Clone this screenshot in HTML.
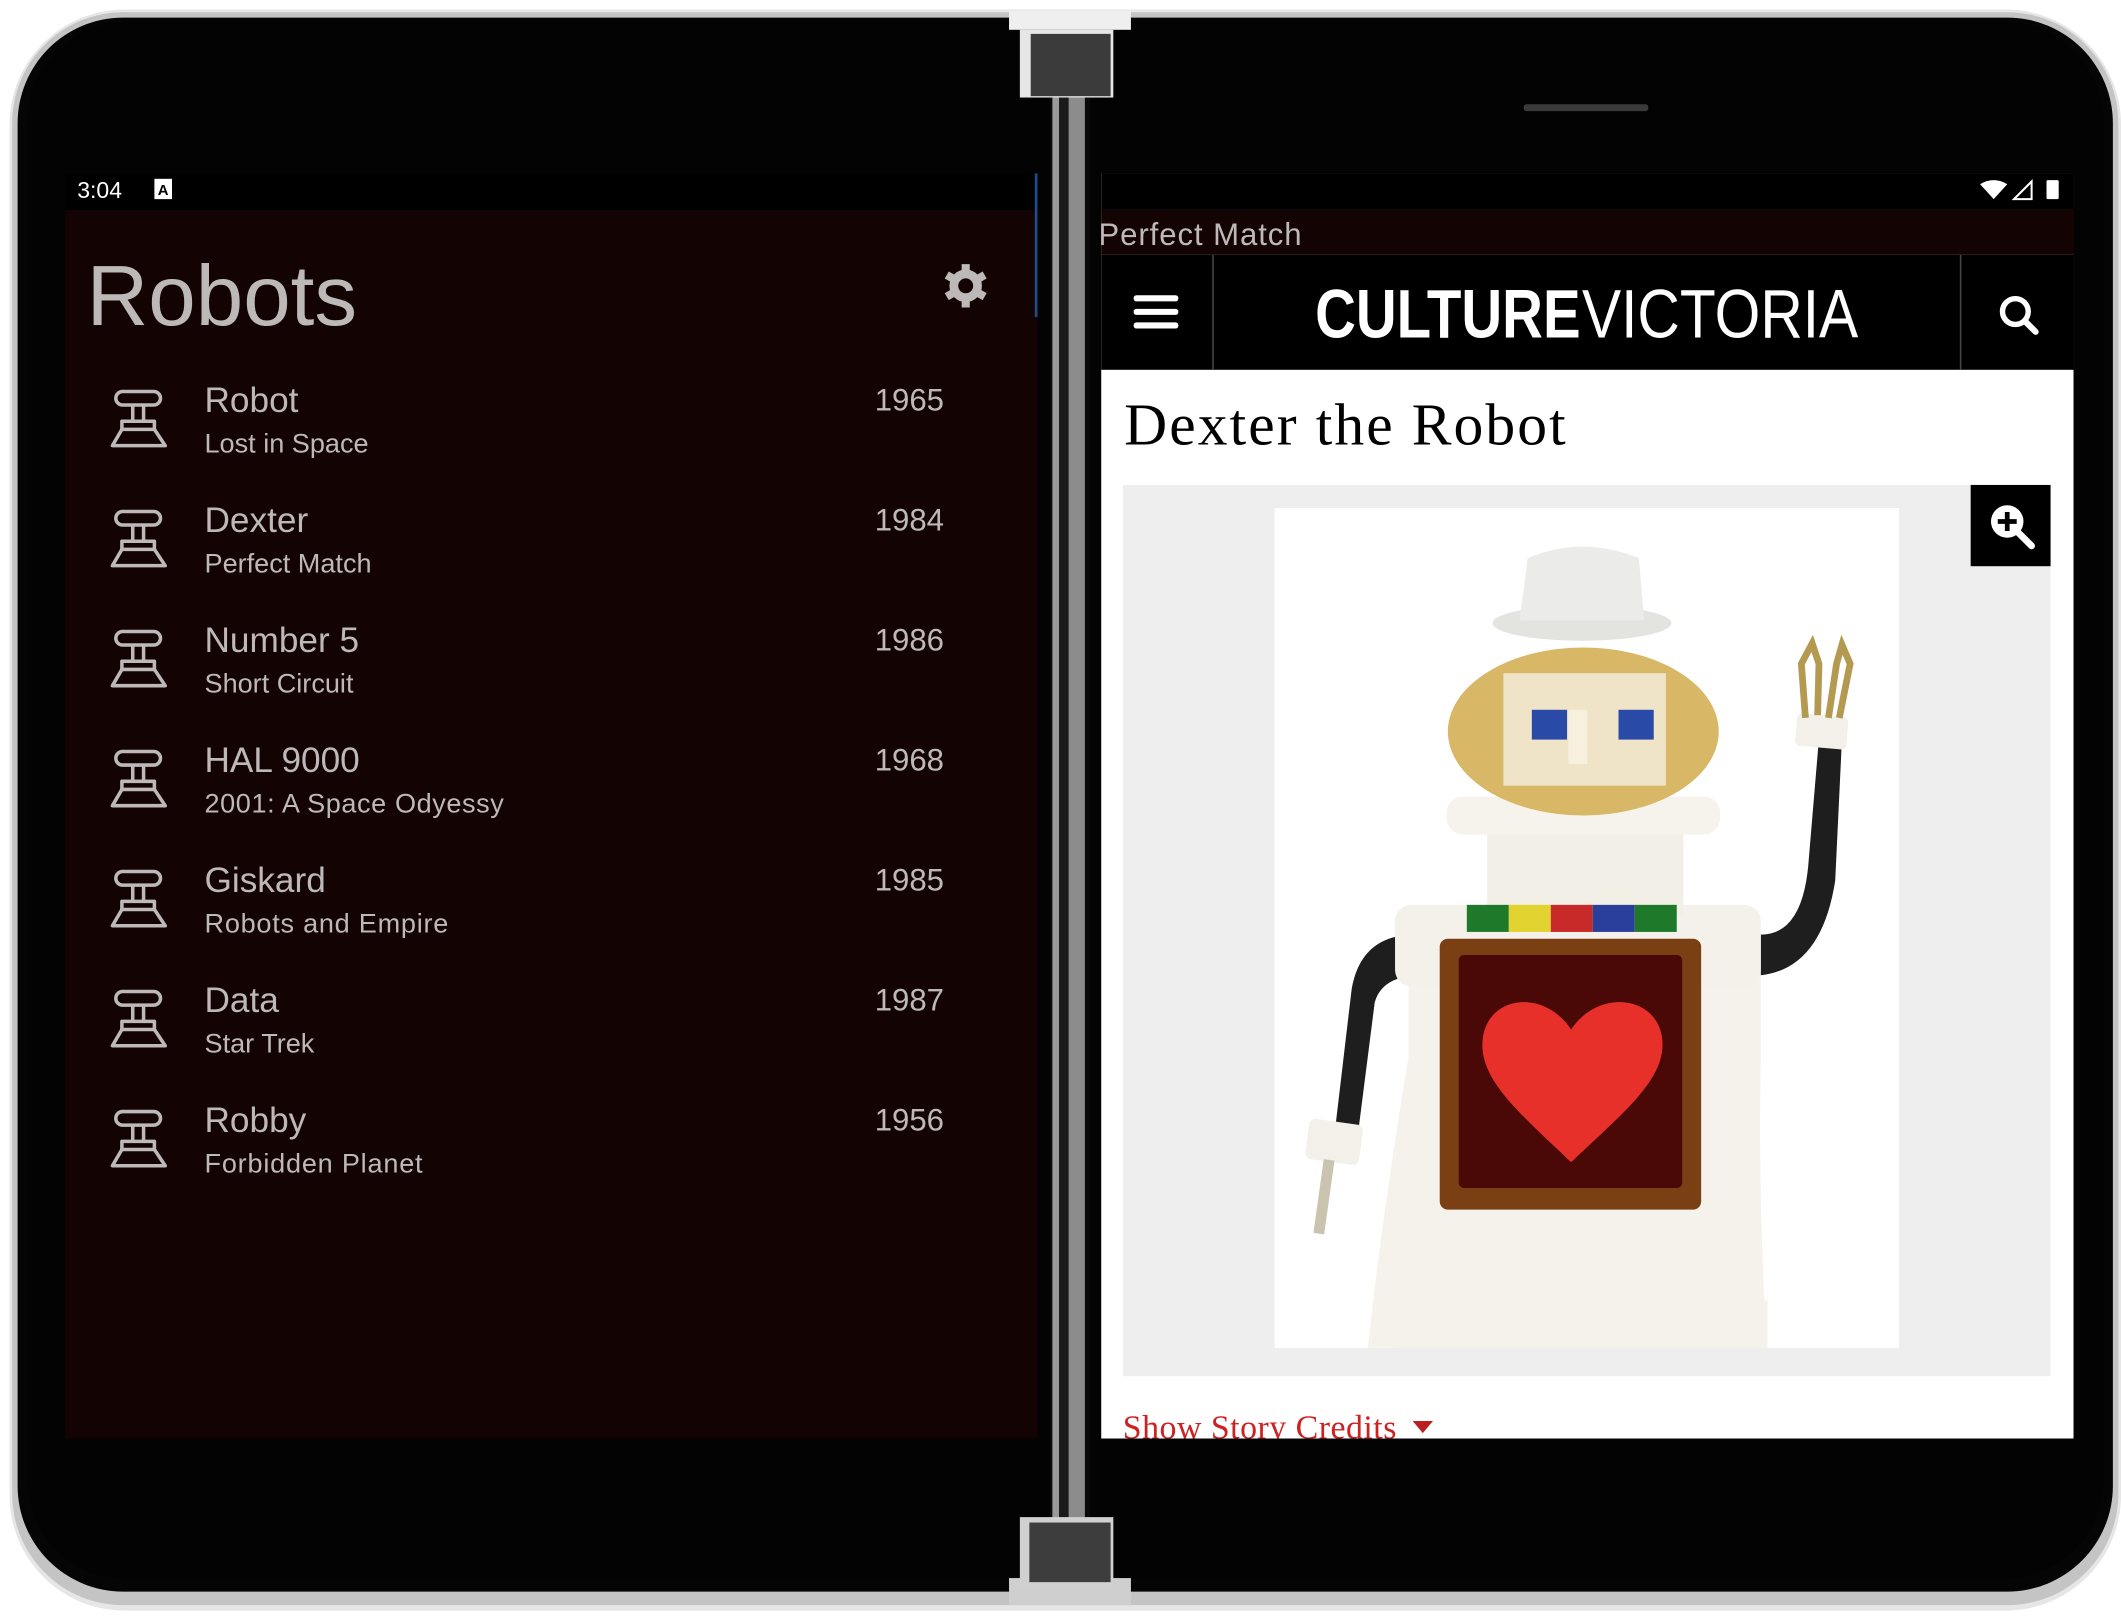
<!DOCTYPE html>
<html><head><meta charset="utf-8"><style>
html,body{margin:0;padding:0;background:#fff;width:2121px;height:1616px;overflow:hidden}
svg{display:block}
</style></head><body>
<svg width="2121" height="1616" viewBox="0 0 1566 1193" preserveAspectRatio="none" xmlns="http://www.w3.org/2000/svg">
<defs>
<g id="ico" fill="none" stroke="#bdb9b9" stroke-width="2.6" stroke-linejoin="round">
<rect x="85.5" y="289" width="33" height="10" rx="5"/>
<line x1="98" y1="299" x2="98" y2="311"/><line x1="106" y1="299" x2="106" y2="311"/>
<rect x="90" y="311" width="24" height="6"/>
<path d="M90 317 L83 329 L122 329 L114 317"/>
</g>
<clipPath id="rc"><rect x="813" y="128" width="718" height="934"/></clipPath>
</defs>
<!-- device frame -->
<rect x="7" y="7" width="1559" height="1182" rx="85" fill="#e6e6e6"/>
<rect x="9" y="9" width="1555" height="1176" rx="82" fill="#c4c4c4"/>
<rect x="13" y="13" width="1547" height="1162" rx="78" fill="#050505"/>
<rect x="20" y="16" width="1533" height="1150" rx="74" fill="#030303"/>
<!-- hinge -->
<rect x="745" y="8" width="90" height="14" fill="#efefef"/>
<rect x="775" y="60" width="30" height="1070" fill="#0a0a0a"/>
<rect x="777" y="60" width="5" height="1070" fill="#9a9a9a"/>
<rect x="782" y="60" width="7" height="1070" fill="#1a1a1a"/>
<rect x="789" y="60" width="12" height="1070" fill="#8c8c8c"/>
<rect x="753" y="22" width="69" height="50" fill="#e6e6e6"/>
<rect x="761" y="25" width="59" height="46" fill="#3b3b3b"/>
<rect x="745" y="1165" width="90" height="20" fill="#cfcfcf"/>
<rect x="753" y="1120" width="69" height="52" fill="#d0d0d0"/>
<rect x="760" y="1124" width="60" height="44" fill="#3d3d3d"/>
<rect x="1125" y="77" width="92" height="5" rx="2" fill="#3a3a3a"/>
<!-- LEFT SCREEN -->
<rect x="48" y="128" width="718" height="934" fill="#140303"/>
<rect x="48" y="128" width="718" height="27" fill="#000"/>
<rect x="764" y="128" width="2" height="106" fill="#1d4e8a"/>
<text x="57" y="146" font-family="Liberation Sans, sans-serif" font-size="17" fill="#fff">3:04</text>
<rect x="114" y="132" width="13" height="15" fill="#fff"/>
<text x="116.5" y="144" font-family="Liberation Sans, sans-serif" font-size="11" font-weight="bold" fill="#000">A</text>
<text x="64" y="240" font-family="Liberation Sans, sans-serif" font-size="63" fill="#bdb9b9">Robots</text>
<g transform="translate(713 211)" fill="#bdb9b9">
<circle r="12"/>
<g stroke="#bdb9b9" stroke-width="6"><line x1="0" y1="-16" x2="0" y2="16"/><line x1="-14" y1="-8" x2="14" y2="8"/><line x1="-14" y1="8" x2="14" y2="-8"/></g>
<circle r="5.5" fill="#140303"/>
</g>
<g font-family="Liberation Sans, sans-serif" fill="#bdb9b9">
<use href="#ico"/>
<text x="151" y="304" font-size="26">Robot</text><text x="151" y="334" font-size="20">Lost in Space</text><text x="697" y="303" font-size="23" text-anchor="end">1965</text>
<use href="#ico" y="88.6"/>
<text x="151" y="392.6" font-size="26">Dexter</text><text x="151" y="422.6" font-size="20">Perfect Match</text><text x="697" y="391.6" font-size="23" text-anchor="end">1984</text>
<use href="#ico" y="177.2"/>
<text x="151" y="481.2" font-size="26">Number 5</text><text x="151" y="511.2" font-size="20">Short Circuit</text><text x="697" y="480.2" font-size="23" text-anchor="end">1986</text>
<use href="#ico" y="265.8"/>
<text x="151" y="569.8" font-size="26">HAL 9000</text><text x="151" y="599.8" font-size="20" textLength="221">2001: A Space Odyessy</text><text x="697" y="568.8" font-size="23" text-anchor="end">1968</text>
<use href="#ico" y="354.4"/>
<text x="151" y="658.4" font-size="26">Giskard</text><text x="151" y="688.4" font-size="20" textLength="180">Robots and Empire</text><text x="697" y="657.4" font-size="23" text-anchor="end">1985</text>
<use href="#ico" y="443"/>
<text x="151" y="747" font-size="26">Data</text><text x="151" y="777" font-size="20">Star Trek</text><text x="697" y="746" font-size="23" text-anchor="end">1987</text>
<use href="#ico" y="531.6"/>
<text x="151" y="835.6" font-size="26">Robby</text><text x="151" y="865.6" font-size="20" textLength="161">Forbidden Planet</text><text x="697" y="834.6" font-size="23" text-anchor="end">1956</text>
</g>
<!-- RIGHT SCREEN -->
<g clip-path="url(#rc)">
<rect x="813" y="128" width="718" height="934" fill="#fff"/>
<rect x="813" y="128" width="718" height="27" fill="#000"/>
<path d="M1462 136 Q1472 130 1482 136 L1472 147 Z" fill="#fff"/>
<path d="M1500 134 L1500 147 L1487 147 Z" fill="none" stroke="#fff" stroke-width="1.5"/>
<rect x="1511" y="133" width="9" height="14" rx="1" fill="#fff"/>
<rect x="813" y="155" width="718" height="33" fill="#140303"/>
<text x="811" y="181" font-family="Liberation Sans, sans-serif" font-size="23" fill="#bdb9b9" textLength="150">Perfect Match</text>
<rect x="813" y="188" width="718" height="85" fill="#000"/>
<rect x="895" y="188" width="1.2" height="85" fill="#444"/>
<rect x="1447" y="188" width="1.2" height="85" fill="#444"/>
<g fill="#fff"><rect x="837" y="218" width="33" height="4.5" rx="2"/><rect x="837" y="228" width="33" height="4.5" rx="2"/><rect x="837" y="238" width="33" height="4.5" rx="2"/></g>
<text x="971" y="249" font-family="Liberation Sans, sans-serif" font-size="51" font-weight="bold" fill="#fff" textLength="196" lengthAdjust="spacingAndGlyphs">CULTURE</text>
<text x="1168" y="249" font-family="Liberation Sans, sans-serif" font-size="51" fill="#fff" textLength="204" lengthAdjust="spacingAndGlyphs">VICTORIA</text>
<circle cx="1488" cy="230" r="9.5" fill="none" stroke="#fff" stroke-width="4"/>
<line x1="1495" y1="237" x2="1503" y2="245" stroke="#fff" stroke-width="4.5" stroke-linecap="round"/>
<text x="830" y="328" font-family="Liberation Serif, serif" font-size="44" fill="#000" textLength="326">Dexter the Robot</text>
<rect x="829" y="358" width="685" height="658" fill="#eeeeee"/>
<rect x="941" y="375" width="461" height="620" fill="#fff"/>
<!-- robot -->
<path d="M1300 690 Q1330 690 1335 640 L1343 545 L1360 545 L1355 650 Q1345 715 1300 720 Z" fill="#1e1e1e"/>
<rect x="1326" y="528" width="38" height="24" rx="4" fill="#f2f0e8" transform="rotate(5 1345 540)"/>
<path d="M1333 530 L1330 490 L1338 475 L1343 490 L1342 528 M1350 530 L1356 490 L1360 476 L1366 490 L1358 530" fill="none" stroke="#b49a50" stroke-width="5"/>
<path d="M1045 690 Q1005 690 998 730 L985 840 L1002 842 L1015 740 Q1020 722 1045 720 Z" fill="#1e1e1e"/>
<rect x="965" y="828" width="40" height="30" rx="5" fill="#f2f0e8" transform="rotate(8 985 843)"/>
<rect x="974" y="856" width="8" height="55" fill="#c9c3b0" transform="rotate(8 978 880)"/>
<path d="M1040 680 L1300 680 L1300 780 Q1298 900 1305 995 L1010 995 Q1020 900 1040 780 Z" fill="#f4f2ea"/>
<rect x="1030" y="668" width="270" height="60" rx="12" fill="#f3f1e9"/>
<rect x="1098" y="610" width="145" height="65" fill="#f2f0e6"/>
<rect x="1083" y="668" width="31" height="20" fill="#1e7a2a"/><rect x="1114" y="668" width="31" height="20" fill="#e3d330"/><rect x="1145" y="668" width="31" height="20" fill="#c82a2a"/><rect x="1176" y="668" width="31" height="20" fill="#2a3f9a"/><rect x="1207" y="668" width="31" height="20" fill="#1e7a2a"/>
<rect x="1063" y="693" width="193" height="200" rx="6" fill="#7a3f12"/>
<rect x="1077" y="705" width="165" height="172" rx="4" fill="#4a0806"/>
<path d="M1160 858 C1120 820 1090 795 1095 765 C1100 735 1140 730 1160 760 C1180 730 1222 735 1227 765 C1232 795 1200 820 1160 858 Z" fill="#e8302a"/>
<rect x="1068" y="588" width="202" height="28" rx="12" fill="#f5f3ec"/>
<ellipse cx="1169" cy="540" rx="100" ry="62" fill="#d8b766"/>
<rect x="1110" y="497" width="120" height="83" fill="#efe3c8"/>
<rect x="1131" y="524" width="26" height="22" fill="#2a4aa8"/><rect x="1195" y="524" width="26" height="22" fill="#2a4aa8"/>
<rect x="1158" y="524" width="14" height="40" fill="#f7f0df"/>
<ellipse cx="1168" cy="460" rx="66" ry="13" fill="#e3e3e0"/>
<path d="M1122 458 L1128 412 Q1168 395 1210 412 L1214 458 Z" fill="#ebebea"/>
<path d="M1040 960 L1305 960 L1305 995 L1030 995 Z" fill="#f4f2ea"/>
<!-- zoom btn -->
<rect x="1455" y="358" width="59" height="60" fill="#000"/>
<circle cx="1482" cy="385" r="12" fill="#fff"/>
<line x1="1490" y1="393" x2="1500" y2="403" stroke="#fff" stroke-width="5" stroke-linecap="round"/>
<path d="M1482 378 V392 M1475 385 H1489" stroke="#000" stroke-width="3.5"/>
<text x="829" y="1062" font-family="Liberation Serif, serif" font-size="25" fill="#cc2222" textLength="202">Show Story Credits</text>
<path d="M1043 1049 L1058 1049 L1050.5 1058 Z" fill="#bb2020"/>
</g>
</svg>
</body></html>
